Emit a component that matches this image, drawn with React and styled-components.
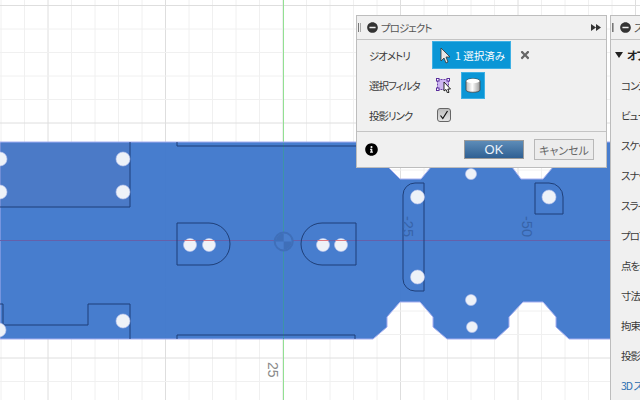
import React from "react";
import styled, { createGlobalStyle } from "styled-components";
import { FaInfoCircle, FaMinusCircle, FaTimes } from "react-icons/fa";

const GlobalStyle = createGlobalStyle`
  html, body {
    margin: 0;
    padding: 0;
    background: #fff;
  }
`;

const Page = styled.div`
  position: relative;
  width: 640px;
  height: 400px;
  overflow: hidden;
  background: #fff;
  font-family: "Noto Sans CJK JP", "Noto Sans", sans-serif;
  font-feature-settings: "palt";
`;

const Canvas = styled.svg`
  display: block;
  width: 640px;
  height: 400px;
`;

const Panel = styled.div`
  position: absolute;
  box-sizing: border-box;
  top: 15px;
  background: #f0f0f0;
  border: 1px solid #bdbdbd;
  color: #3a3a3a;
  font-size: 10.5px;
  letter-spacing: -1px;
`;

const Dialog = styled(Panel)`
  left: 356px;
  width: 251px;
  height: 153px;
`;

const Palette = styled(Panel)`
  left: 610px;
  width: 60px;
  height: 400px;
  white-space: nowrap;
`;

const Header = styled.div`
  display: flex;
  align-items: center;
  box-sizing: border-box;
  height: 24px;
  padding-left: 1px;
  border-bottom: 1px solid #c4c4c4;
  color: #555;
  font-size: 10.5px;
`;

const Grip = styled.span`
  width: 1px;
  height: 9px;
  margin-right: 6px;
  border-left: 1px solid #777;
  border-right: 1px solid #aaa;
`;

const Collapse = styled(FaMinusCircle)`
  flex: none;
  width: 11px;
  height: 11px;
  margin-right: 3px;
  color: #333;
`;

const Forward = styled.svg`
  width: 10px;
  height: 7px;
  margin-left: auto;
  margin-right: 5px;
  fill: #333;
`;

const Body = styled.div`
  display: grid;
  grid-template-columns: 63px 1fr;
  grid-auto-rows: 30px;
  align-items: center;
  box-sizing: border-box;
  height: 92px;
  padding-left: 12px;
  border-bottom: 1px solid #c4c4c4;
`;

const Field = styled.div`
  display: flex;
  align-items: center;
`;

const SelectButton = styled.div`
  display: flex;
  align-items: center;
  gap: 4px;
  box-sizing: border-box;
  width: 79px;
  height: 28px;
  padding-left: 7px;
  background: #0a96d6;
  border: 1px solid #3fb0e4;
  color: #fff;
  font-size: 10.5px;
  letter-spacing: 0;
  white-space: nowrap;
`;

const Clear = styled(FaTimes)`
  width: 12px;
  height: 12px;
  margin-left: 8px;
  color: #666;
`;

const FilterIcon = styled.svg`
  width: 17px;
  height: 15px;
  margin-left: 4px;
`;

const FilterButton = styled.div`
  display: flex;
  align-items: center;
  justify-content: center;
  box-sizing: border-box;
  width: 24px;
  height: 27px;
  margin-left: 8px;
  background: #0a96d6;
  border: 1px solid #3fb0e4;
`;

const CheckBox = styled.div`
  display: flex;
  align-items: center;
  justify-content: center;
  box-sizing: border-box;
  width: 14px;
  height: 14px;
  margin-left: 5px;
  background: linear-gradient(#bdbdbd, #e4e4e4);
  border: 1px solid #666;
  border-radius: 3px;
`;

const Footer = styled.div`
  display: flex;
  align-items: center;
  height: 35px;
  padding-left: 8px;
`;

const InfoIcon = styled(FaInfoCircle)`
  width: 13px;
  height: 13px;
  margin-right: auto;
  color: #000;
`;

const OkButton = styled.div`
  display: flex;
  align-items: center;
  justify-content: center;
  box-sizing: border-box;
  width: 60px;
  height: 19px;
  background: linear-gradient(#5d8cb8, #2f6093);
  border: 1px solid #9a9a9a;
  color: #eaf2fa;
  font-family: "Liberation Sans", sans-serif;
  font-size: 13px;
  letter-spacing: 0;
`;

const CancelButton = styled.div`
  display: flex;
  align-items: center;
  justify-content: center;
  box-sizing: border-box;
  width: 60px;
  height: 21px;
  margin: 0 12px 0 10px;
  background: #ececec;
  border: 1px solid #b8b8b8;
  color: #666;
  font-size: 11px;
  letter-spacing: 0;
`;

const GroupHead = styled.div`
  display: flex;
  align-items: center;
  height: 30px;
  padding-left: 4px;
  font-size: 11px;
  font-weight: 700;
  color: #222;
`;

const Caret = styled.span`
  width: 0;
  height: 0;
  margin-right: 4px;
  border-left: 4px solid transparent;
  border-right: 4px solid transparent;
  border-top: 6px solid #222;
`;

const PaletteRow = styled.div`
  display: flex;
  align-items: center;
  height: 30px;
  padding-left: 10px;
  color: ${(p) => (p.$accent ? "#2c6fb0" : "#3a3a3a")};
`;

const minorX = Array.from({ length: 28 }, (_, i) => 1 + i * 23.5);
const minorY = Array.from({ length: 18 }, (_, i) => 5.5 + i * 23.5);

const partOutline =
  "M0 142H376V155L388 167L400 179H421L431 167L443 155V142H500V155L512 167L521 179H543L553 167L565 155V142H612V339H569L556 327V317L543 302H523L509 317V327L496 339H447L433 327V317L420 302H400L387 317V327L373 339H0Z";

const sketchLines = [
  "M130 142V207H0",
  "M0 304H3V325H88V304H130V339",
  "M177 142V146H362",
  "M177 339V335H355V339",
  "M177 223H209A21 21 0 0 1 209 265H177Z",
  "M356 223H322A21 21 0 0 0 322 265H356Z",
  "M424 183H415A12 12 0 0 0 403 195V279A12 12 0 0 0 415 291H424Z",
  "M535 183H549A14 14 0 0 1 563 197V214H535Z",
];

const holes = [
  [0, 159, 7], [0, 192, 7], [123, 159, 7], [123, 192, 7],
  [123, 321, 7], [-1, 330, 7],
  [190, 245, 6.5], [209, 245, 6.5], [323, 245, 6.5], [341, 245, 6.5],
  [417.5, 197, 7], [417.5, 277, 7], [549, 197, 7],
  [471, 174, 5.5], [471, 300, 5.5], [472, 327, 5.5],
];

const paletteItems = [
  "コンストラクション",
  "ビューを正面に",
  "スケッチグリッド",
  "スナップ",
  "スライス",
  "プロファイルを表示",
  "点を表示",
  "寸法を表示",
  "拘束を表示",
  "投影されたジオメトリ",
];

const Viewport = () => (
  <Canvas viewBox="0 0 640 400">
    {minorX.map((x, i) => (
      <line key={x} x1={x} x2={x} y1="0" y2="400" stroke={i % 5 === 2 ? "#dedede" : "#f0f0f0"} />
    ))}
    {minorY.map((y, i) => (
      <line key={y} y1={y} y2={y} x1="0" x2="640" stroke={i % 5 === 0 ? "#dedede" : "#f0f0f0"} />
    ))}
    <line x1="283.5" x2="283.5" y1="0" y2="400" stroke="#92e092" />
    <path d={partOutline} fill="#4078cc" fillOpacity="0.96" stroke="#a5aef0" strokeWidth="1" />
    <rect x="0" y="143" width="130" height="64" fill="#5a74b0" fillOpacity="0.22" />
    <line x1="0" x2="612" y1="240.5" y2="240.5" stroke="#6560aa" />
    <line x1="283.5" x2="283.5" y1="143" y2="339" stroke="#3e93a8" />
    {sketchLines.map((d) => (
      <path key={d} d={d} fill="none" stroke="#1f3f78" strokeWidth="1" />
    ))}
    {holes.map(([cx, cy, r]) => (
      <circle key={`${cx}-${cy}`} cx={cx} cy={cy} r={r} fill="#eef2f8" stroke="#b9c2ee" strokeWidth="0.6" />
    ))}
    {[190, 209, 323, 341].map((x) => (
      <line key={x} x1={x - 5.5} x2={x + 5.5} y1="240.5" y2="240.5" stroke="#e07a80" />
    ))}
    <circle cx="283.7" cy="241.5" r="9" fill="#4a7fce" stroke="#3f6fb9" strokeWidth="2" />
    <path d="M283.7 241.5V233.5A8 8 0 0 0 275.7 241.5ZM283.7 241.5V249.5A8 8 0 0 0 291.7 241.5Z" fill="#3f6fb9" />
    <text transform="translate(403 216) rotate(90)" fontSize="14.5" fontFamily="Liberation Sans" fill="#3763a8">-25</text>
    <text transform="translate(522 216) rotate(90)" fontSize="14.5" fontFamily="Liberation Sans" fill="#3763a8">-50</text>
    <text transform="translate(268 362) rotate(90)" fontSize="14" fontFamily="Liberation Sans" fill="#8a8a8a">25</text>
  </Canvas>
);

const App = () => (
  <Page>
    <GlobalStyle />
    <Viewport />
    <Dialog>
      <Header>
        <Grip />
        <Collapse />
        プロジェクト
        <Forward viewBox="0 0 10 7">
          <path d="M0 0L5 3.5L0 7ZM5 0L10 3.5L5 7Z" />
        </Forward>
      </Header>
      <Body>
        <span>ジオメトリ</span>
        <Field>
          <SelectButton>
            <svg width="11" height="17" viewBox="0 0 11 17">
              <path d="M1 1V14L4 11L6 16L8 15L6 10H10Z" fill="#e8e8e8" stroke="#333" strokeWidth="0.8" />
            </svg>
            1 選択済み
          </SelectButton>
          <Clear />
        </Field>
        <span>選択フィルタ</span>
        <Field>
          <FilterIcon viewBox="0 0 17 15">
            <rect x="1.5" y="1.5" width="11" height="10" fill="#cdb6f2" stroke="#6b3fa8" strokeDasharray="2 1" />
            <rect x="0.5" y="0.5" width="2.5" height="2.5" fill="#fff" stroke="#5a2d9c" />
            <rect x="11" y="0.5" width="2.5" height="2.5" fill="#fff" stroke="#5a2d9c" />
            <rect x="0.5" y="10" width="2.5" height="2.5" fill="#fff" stroke="#5a2d9c" />
            <path d="M8 4V13L10 11.5L11.5 15L13 14.3L11.8 11H14.5Z" fill="#fff" stroke="#111" strokeWidth="0.9" />
          </FilterIcon>
          <FilterButton>
            <svg width="16" height="17" viewBox="0 0 16 17">
              <defs>
                <linearGradient id="cyl" x1="0" x2="1" y1="0" y2="0">
                  <stop offset="0" stopColor="#b8b8b8" />
                  <stop offset="0.45" stopColor="#fff" />
                  <stop offset="1" stopColor="#9a9a9a" />
                </linearGradient>
              </defs>
              <path d="M1 4C1 1 15 1 15 4V13C15 16 1 16 1 13Z" fill="url(#cyl)" stroke="#444" strokeWidth="0.8" />
              <ellipse cx="8" cy="4" rx="6.6" ry="2.2" fill="#fff" />
            </svg>
          </FilterButton>
        </Field>
        <span>投影リンク</span>
        <Field>
          <CheckBox>
            <svg width="10" height="10" viewBox="0 0 10 10">
              <path d="M1.5 5.5L3.8 8.5L8.5 1" fill="none" stroke="#111" strokeWidth="1.2" />
            </svg>
          </CheckBox>
        </Field>
      </Body>
      <Footer>
        <InfoIcon />
        <OkButton>OK</OkButton>
        <CancelButton>キャンセル</CancelButton>
      </Footer>
    </Dialog>
    <Palette>
      <Header>
        <Grip />
        <Collapse />
        スケッチパレット
      </Header>
      <GroupHead>
        <Caret />
        オプション
      </GroupHead>
      {paletteItems.map((label) => (
        <PaletteRow key={label}>{label}</PaletteRow>
      ))}
      <PaletteRow $accent>3D スケッチ</PaletteRow>
    </Palette>
  </Page>
);

export default App;
